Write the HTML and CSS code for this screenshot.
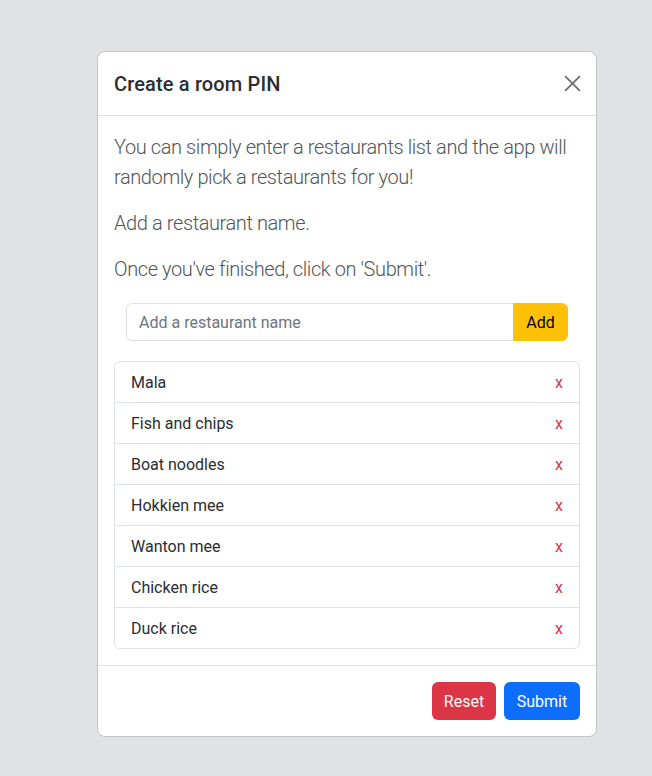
FILE: index.html
```html
<!DOCTYPE html>
<html lang="en">
<head>
<meta charset="utf-8">
<title>Create a room PIN</title>
<link rel="stylesheet" href="styles.css">
</head>
<body>
<div class="backdrop">
  <div class="modal">
    <div class="modal-header">
      <h5 class="modal-title">Create a room PIN</h5>
      <button class="btn-close" type="button" aria-label="Close">
        <svg viewBox="0 0 16 16" width="16" height="16"><path d="M1 1L15 15M15 1L1 15" stroke="currentColor" stroke-width="1.6" fill="none"/></svg>
      </button>
    </div>
    <div class="modal-body">
      <p class="lead">You can simply enter a restaurants list and the app will randomly pick a restaurants for you!</p>
      <p class="lead">Add a restaurant name.</p>
      <p class="lead">Once you've finished, click on 'Submit'.</p>
      <div class="input-wrap">
        <div class="input-group">
          <input class="form-control" type="text" placeholder="Add a restaurant name">
          <button class="btn btn-warning" type="button">Add</button>
        </div>
      </div>
      <ul class="list-group">
        <li class="list-item"><span>Mala</span><span class="remove">x</span></li>
        <li class="list-item"><span>Fish and chips</span><span class="remove">x</span></li>
        <li class="list-item"><span>Boat noodles</span><span class="remove">x</span></li>
        <li class="list-item"><span>Hokkien mee</span><span class="remove">x</span></li>
        <li class="list-item"><span>Wanton mee</span><span class="remove">x</span></li>
        <li class="list-item"><span>Chicken rice</span><span class="remove">x</span></li>
        <li class="list-item"><span>Duck rice</span><span class="remove">x</span></li>
      </ul>
    </div>
    <div class="modal-footer">
      <button class="btn btn-danger" type="button">Reset</button>
      <button class="btn btn-primary" type="button">Submit</button>
    </div>
  </div>
</div>
</body>
</html>
```
FILE: styles.css
```css
* { box-sizing: border-box; }
html, body { margin: 0; padding: 0; }
body {
  font-family: Roboto, "Noto Sans", sans-serif;
  font-size: 16px;
  line-height: 1.5;
  color: #212529;
  background: #e1e2e4;
}
.backdrop {
  width: 652px;
  height: 776px;
  padding-top: 51px;
  padding-left: 97px;
}
.modal {
  width: 500px;
  background: #fff;
  border: 1px solid #c4c5c7;
  border-radius: 8px;
  display: flex;
  flex-direction: column;
}
.modal-header {
  display: flex;
  align-items: center;
  justify-content: space-between;
  padding: 16px;
  border-bottom: 1px solid #dee2e6;
  height: 64px;
}
.modal-title {
  margin: 0;
  font-size: 20px;
  font-weight: 500;
  line-height: 1.5;
  color: #2a2e33;
  letter-spacing: 0.15px;
}
.btn-close {
  border: 0;
  background: transparent;
  padding: 0;
  margin-right: -1px;
  width: 18px;
  height: 18px;
  color: #6b6b6b;
  display: flex;
  align-items: center;
  justify-content: center;
}
.btn-close svg { width: 17px; height: 17px; display: block; }
.modal-body {
  padding: 16px;
}
.lead {
  margin: 0 0 16px;
  font-size: 20px;
  font-weight: 300;
  line-height: 30px;
  letter-spacing: -0.4px;
  color: #50555a;
}
.input-wrap {
  padding: 3px 12px 0;
  margin-bottom: 20px;
}
.input-group {
  display: flex;
  height: 38px;
}
.form-control {
  flex: 1;
  min-width: 0;
  border: 1px solid #dee2e6;
  border-right: 0;
  border-radius: 6px 0 0 6px;
  padding: 7px 12px 5px;
  font: inherit;
  font-size: 16px;
  color: #212529;
  outline: none;
}
.form-control::placeholder { color: #6c757d; opacity: 1; }
.btn {
  font: inherit;
  font-size: 16px;
  line-height: 24px;
  border: 1px solid transparent;
  border-radius: 6px;
  height: 38px;
  padding: 7px 0 5px;
}
.btn-warning {
  background: #ffc107;
  border-color: #ffc107;
  color: #000;
  border-radius: 0 6px 6px 0;
  width: 55px;
}
.btn-danger { background: #dc3545; color: #fff; width: 64px; }
.btn-primary { background: #0d6efd; color: #fff; width: 76px; }
.list-group {
  list-style: none;
  margin: 0;
  padding: 0;
  border: 1px solid #dee2e6;
  border-radius: 6px;
}
.list-item {
  display: flex;
  justify-content: space-between;
  align-items: center;
  padding: 9px 16px 7px;
  height: 41px;
  font-size: 16px;
  color: #2a2e33;
  border-top: 1px solid #dee2e6;
}
.list-item:first-child { border-top: 0; height: 40px; }
.remove { color: #dc3545; }
.modal-footer {
  display: flex;
  justify-content: flex-end;
  gap: 8px;
  padding: 16px;
  border-top: 1px solid #dee2e6;
}
```
